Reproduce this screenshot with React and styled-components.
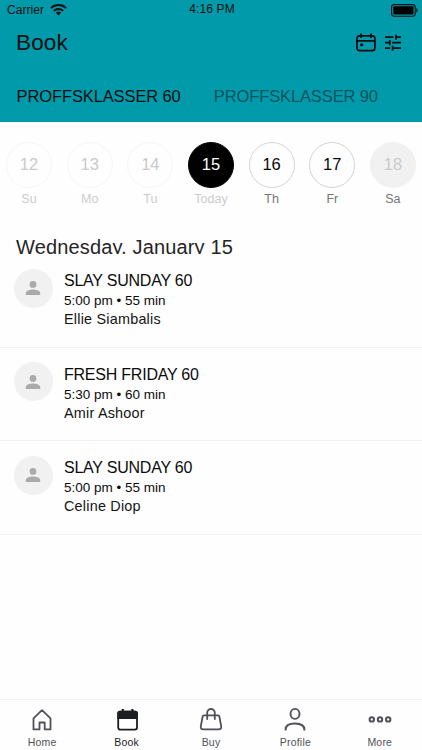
import React from 'react';
import styled, { createGlobalStyle } from 'styled-components';

const GlobalStyle = createGlobalStyle`
  * {
    box-sizing: border-box;
  }
  body {
    margin: 0;
    background: #fefefe;
    font-family: "Liberation Sans", Arial, sans-serif;
    -webkit-font-smoothing: antialiased;
  }
`;

const S = {
    Screen: styled.div`
    width: 422px;
    height: 750px;
    display: flex;
    flex-direction: column;
    overflow: hidden;
    background: #fefefe;
  `,
    Header: styled.header`
    height: 122px;
    background: #009aaa;
    color: #050f10;
    flex-shrink: 0;
  `,
    StatusBar: styled.div`
    height: 20px;
    padding: 0 4px 0 7px;
    display: grid;
    grid-template-columns: 1fr auto 1fr;
    align-items: center;
    font-size: 12px;
    line-height: 20px;
  `,
    Carrier: styled.div`
    display: flex;
    align-items: center;
    gap: 6px;
    letter-spacing: 0.05px;
  `,
    Time: styled.div`
    padding-right: 1px;
    letter-spacing: 0.12px;
    line-height: 19px;
    align-self: start;
  `,
    Battery: styled.div`
    display: flex;
    justify-content: flex-end;
  `,
    TitleBar: styled.div`
    height: 46px;
    padding: 0 20px 0 16px;
    display: flex;
    align-items: center;
    justify-content: space-between;
  `,
    Title: styled.h1`
    margin: 0;
    font-size: 22.5px;
    font-weight: normal;
    line-height: 46px;
    letter-spacing: 0.15px;
  `,
    Actions: styled.div`
    display: flex;
    align-items: center;
    gap: 8px;
  `,
    Tabs: styled.nav`
    display: flex;
    gap: 33.2px;
    padding: 19px 0 0 16.6px;
  `,
    Tab: styled.span`
    font-size: 16.5px;
    line-height: 22px;
    letter-spacing: -0.12px;
    white-space: nowrap;
    color: ${props => (props.$active ? '#050f10' : '#04545d')};
  `,
    Days: styled.div`
    display: flex;
    justify-content: space-between;
    padding: 19.5px 6px 0;
  `,
    Day: styled.div`
    width: 46px;
    display: flex;
    flex-direction: column;
    align-items: center;
  `,
    DayNumber: styled.div`
    width: 46px;
    height: 46px;
    border-radius: 50%;
    border: 1px solid ${props => dayColors[props.$kind].border};
    background: ${props => dayColors[props.$kind].fill};
    color: ${props => dayColors[props.$kind].number};
    font-size: 16.5px;
    line-height: 43px;
    text-align: center;
  `,
    DayName: styled.div`
    margin-top: 3px;
    font-size: 12.5px;
    line-height: 16px;
    white-space: nowrap;
    color: ${props => dayColors[props.$kind].name};
  `,
    // the heading is shorter than its line, so descenders are cut off
    DateHeading: styled.h2`
    height: 20px;
    margin: 27.5px 0 0;
    padding-left: 16px;
    overflow: hidden;
    font-size: 20px;
    font-weight: normal;
    line-height: 26px;
    letter-spacing: 0.15px;
    color: #252525;
  `,
    ClassList: styled.ul`
    margin: 0;
    padding: 0;
    flex: 1;
    list-style: none;
  `,
    ClassItem: styled.li`
    height: 93.7px;
    padding: 14.5px 14px 0 13.5px;
    display: flex;
    gap: 11.5px;
    border-bottom: 1px solid #f1f1f1;
  `,
    Avatar: styled.div`
    width: 39px;
    height: 39px;
    border-radius: 50%;
    background: #f1f1f1;
    display: flex;
    align-items: center;
    justify-content: center;
    flex-shrink: 0;
  `,
    ClassTitle: styled.div`
    margin-top: 2.5px;
    font-size: 16px;
    line-height: 20px;
    letter-spacing: -0.23px;
    color: #0c0c0c;
  `,
    ClassTime: styled.div`
    font-size: 13.5px;
    line-height: 19px;
    color: #0c0c0c;
  `,
    Teacher: styled.div`
    font-size: 14.4px;
    line-height: 19px;
    letter-spacing: 0.22px;
    color: #141414;
  `,
    BottomBar: styled.nav`
    height: 51px;
    flex-shrink: 0;
    display: grid;
    grid-template-columns: repeat(5, 1fr);
    border-top: 1px solid #f1f1f1;
  `,
    BarItem: styled.div`
    display: flex;
    flex-direction: column;
    align-items: center;
    padding-top: 6px;
    font-size: 10.5px;
    line-height: 14px;
    letter-spacing: 0.2px;
    color: ${props => (props.$active ? '#1d1e22' : '#505157')};

    svg {
      display: block;
      margin-bottom: 3px;
    }
  `,
};

const dayColors = {
    past: { border: '#f5f5f5', fill: 'transparent', number: '#cacaca', name: '#cccccc' },
    today: { border: '#000000', fill: '#000000', number: '#ffffff', name: '#cccccc' },
    open: { border: '#d4d4d4', fill: 'transparent', number: '#090909', name: '#757575' },
    closed: { border: '#f1f1f1', fill: '#f1f1f1', number: '#cacaca', name: '#757575' },
};

const days = [
    { number: 12, name: 'Su', kind: 'past' },
    { number: 13, name: 'Mo', kind: 'past' },
    { number: 14, name: 'Tu', kind: 'past' },
    { number: 15, name: 'Today', kind: 'today' },
    { number: 16, name: 'Th', kind: 'open' },
    { number: 17, name: 'Fr', kind: 'open' },
    { number: 18, name: 'Sa', kind: 'closed' },
];

const classes = [
    { title: 'SLAY SUNDAY 60', time: '5:00 pm • 55 min', teacher: 'Ellie Siambalis' },
    { title: 'FRESH FRIDAY 60', time: '5:30 pm • 60 min', teacher: 'Amir Ashoor' },
    { title: 'SLAY SUNDAY 60', time: '5:00 pm • 55 min', teacher: 'Celine Diop' },
];

const WifiIcon = () => (
    <svg width="17" height="12" viewBox="0 0 17 12" fill="none" stroke="#050f10" strokeWidth="1.9">
        <path d="M1 4.1a10.8 10.8 0 0 1 15 0" />
        <path d="M3.8 6.9a6.8 6.8 0 0 1 9.4 0" />
        <path d="M6 8.8a3.6 3.6 0 0 1 5 0L8.5 11.4z" fill="#050f10" stroke="none" />
    </svg>
);

const BatteryIcon = () => (
    <svg width="27" height="13" viewBox="0 0 27 13">
        <rect x="0.6" y="0.6" width="23.6" height="11.6" rx="2.6" fill="none" stroke="#050f10" strokeWidth="1.1" />
        <rect x="2.3" y="2.3" width="20.2" height="8.2" rx="1" fill="#000000" />
        <path d="M25.2 4.2c1.9.6 1.9 3.8 0 4.4z" fill="#050f10" />
    </svg>
);

const CalendarIcon = () => (
    <svg width="20" height="20" viewBox="0 0 20 20" fill="none" stroke="#050f10" strokeWidth="1.8">
        <rect x="0.9" y="2.8" width="18" height="14.9" rx="2.6" />
        <path d="M1 7.8h18M5 .5v4.4M15 .5v4.4" />
        <rect x="4.1" y="10.4" width="3" height="2.8" rx=".8" fill="#050f10" stroke="none" />
    </svg>
);

const TuneIcon = () => (
    <svg width="18" height="18" viewBox="0 0 18 18" fill="none" stroke="#050f10" strokeWidth="1.8">
        <path d="M1 3.2h8.5M12 3.2h5M12 .7v5" />
        <path d="M1 8.7h4.8M5.8 6.1v5.2M8.2 8.7H17" />
        <path d="M1 14.2h5M8.6 11.7v5M8.6 14.2H17" />
    </svg>
);

const PersonIcon = () => (
    <svg width="16" height="16" viewBox="0 0 16 16" fill="#aaaaaa">
        <circle cx="8" cy="4.4" r="3.4" />
        <path d="M.8 15v-1.8c0-2.5 4.6-3.6 7.2-3.6s7.2 1.1 7.2 3.6V15z" />
    </svg>
);

const barIcon = { width: 26, height: 26, viewBox: '0 0 26 26', fill: 'none', stroke: '#505157', strokeWidth: 1.8 };

const HomeIcon = () => (
    <svg {...barIcon} strokeLinejoin="round">
        <path d="M4.5 12.4 13 4.2l8.5 8.2v11H15.7v-6.9h-5.2v6.9h-6z" />
    </svg>
);

const BookIcon = () => (
    <svg {...barIcon} stroke="#1d1e22">
        <rect x="4.2" y="5.6" width="18.8" height="18" rx="2" />
        <path d="M4.2 12V7.4q0-1.8 1.8-1.8h15.2q1.8 0 1.8 1.8V12z" fill="#1d1e22" />
        <path d="M8.8 3v3M18.4 3v3" strokeWidth="2.2" />
    </svg>
);

const BuyIcon = () => (
    <svg {...barIcon} strokeLinecap="round" strokeLinejoin="round">
        <path d="M6 9.4h14q1.2 0 1.4 1.2l1.8 9.8q.4 3-2.6 3H5.4q-3 0-2.6-3l1.8-9.8Q4.8 9.4 6 9.4z" />
        <path d="M9.2 13V6.8a3.8 3.8 0 0 1 7.6 0V13" />
    </svg>
);

const ProfileIcon = () => (
    <svg {...barIcon} strokeWidth="1.9">
        <ellipse cx="13" cy="7.9" rx="4.5" ry="5" />
        <path d="M3.6 24.5v-.8c0-3.8 3.6-6.2 9.4-6.2s9.4 2.4 9.4 6.2v.8" />
    </svg>
);

const MoreIcon = () => (
    <svg {...barIcon} strokeWidth="2">
        <circle cx="4.8" cy="13.4" r="2.2" />
        <circle cx="13" cy="13.4" r="2.2" />
        <circle cx="21.2" cy="13.4" r="2.2" />
    </svg>
);

const barItems = [
    { name: 'Home', Icon: HomeIcon },
    { name: 'Book', Icon: BookIcon, active: true },
    { name: 'Buy', Icon: BuyIcon },
    { name: 'Profile', Icon: ProfileIcon },
    { name: 'More', Icon: MoreIcon },
];

const App = () => {

    return (
        <S.Screen>
            <GlobalStyle />
            <S.Header>
                <S.StatusBar>
                    <S.Carrier>
                        Carrier
                        <WifiIcon />
                    </S.Carrier>
                    <S.Time>4:16 PM</S.Time>
                    <S.Battery>
                        <BatteryIcon />
                    </S.Battery>
                </S.StatusBar>
                <S.TitleBar>
                    <S.Title>Book</S.Title>
                    <S.Actions>
                        <CalendarIcon />
                        <TuneIcon />
                    </S.Actions>
                </S.TitleBar>
                <S.Tabs>
                    <S.Tab $active>PROFFSKLASSER 60</S.Tab>
                    <S.Tab>PROFFSKLASSER 90</S.Tab>
                </S.Tabs>
            </S.Header>
            <S.Days>
                {days.map(day => (
                    <S.Day key={day.number}>
                        <S.DayNumber $kind={day.kind}>{day.number}</S.DayNumber>
                        <S.DayName $kind={day.kind}>{day.name}</S.DayName>
                    </S.Day>
                ))}
            </S.Days>
            <S.DateHeading>Wednesday, January 15</S.DateHeading>
            <S.ClassList>
                {classes.map((item, index) => (
                    <S.ClassItem key={index}>
                        <S.Avatar>
                            <PersonIcon />
                        </S.Avatar>
                        <div>
                            <S.ClassTitle>{item.title}</S.ClassTitle>
                            <S.ClassTime>{item.time}</S.ClassTime>
                            <S.Teacher>{item.teacher}</S.Teacher>
                        </div>
                    </S.ClassItem>
                ))}
            </S.ClassList>
            <S.BottomBar>
                {barItems.map(({ name, Icon, active }) => (
                    <S.BarItem key={name} $active={active}>
                        <Icon />
                        {name}
                    </S.BarItem>
                ))}
            </S.BottomBar>
        </S.Screen>
    );
};

export default App;
